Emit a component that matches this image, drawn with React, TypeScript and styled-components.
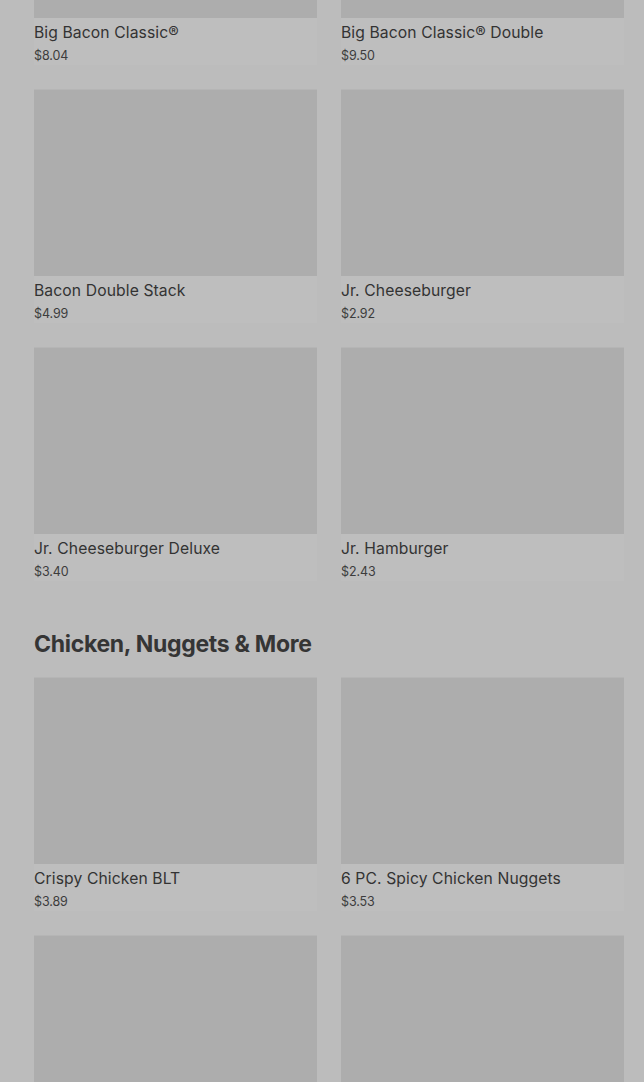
import React from "react";
import styled, { createGlobalStyle } from "styled-components";

const Global = createGlobalStyle`
  html, body { margin: 0; padding: 0; background: #bcbcbc; }
  body { font-family: Inter, "Noto Sans", sans-serif; overflow: hidden; }
`;

const Page = styled.div`
  padding: 0 20px 0 34px;
  margin-top: -169px;
`;

const Section = styled.section`
  display: flex;
  flex-direction: column;
  margin-bottom: 47px;
`;

const Heading = styled.h2`
  margin: 0 0 17px;
  font-family: Inter, "Noto Sans", sans-serif;
  font-size: 23px;
  line-height: 32px;
  font-weight: 700;
  letter-spacing: -0.3px;
  color: #353535;
`;

const Grid = styled.div`
  display: grid;
  grid-template-columns: 283px 283px;
  column-gap: 24px;
  row-gap: 24px;
`;

const Card = styled.div`
  display: flex;
  flex-direction: column;
  background: #bebebe;
`;

const Img = styled.div`
  height: 187px;
  background: #adadad;
  border-top: 1px solid #b5b5b5;
  box-sizing: border-box;
`;

const Title = styled.div`
  margin-top: 5px;
  font-size: 15.7px;
  line-height: 20px;
  color: #333;
  letter-spacing: 0.1px;
`;

const Price = styled.div`
  margin-top: 4px;
  font-size: 12.5px;
  line-height: 18px;
  color: #3c3c3c;
  letter-spacing: -0.1px;
`;

type Item = { name: string; price: string };

const burgers: Item[] = [
  { name: "Big Bacon Classic®", price: "$8.04" },
  { name: "Big Bacon Classic® Double", price: "$9.50" },
  { name: "Bacon Double Stack", price: "$4.99" },
  { name: "Jr. Cheeseburger", price: "$2.92" },
  { name: "Jr. Cheeseburger Deluxe", price: "$3.40" },
  { name: "Jr. Hamburger", price: "$2.43" },
];

const chicken: Item[] = [
  { name: "Crispy Chicken BLT", price: "$3.89" },
  { name: "6 PC. Spicy Chicken Nuggets", price: "$3.53" },
  { name: "", price: "" },
  { name: "", price: "" },
];

const Items = ({ items }: { items: Item[] }) => (
  <Grid>
    {items.map((it, i) => (
      <Card key={i}>
        <Img />
        {it.name && <Title>{it.name}</Title>}
        {it.price && <Price>{it.price}</Price>}
      </Card>
    ))}
  </Grid>
);

export default function App() {
  return (
    <>
      <Global />
      <Page>
        <Section>
          <Items items={burgers} />
        </Section>
        <Section>
          <Heading>Chicken, Nuggets &amp; More</Heading>
          <Items items={chicken} />
        </Section>
      </Page>
    </>
  );
}
